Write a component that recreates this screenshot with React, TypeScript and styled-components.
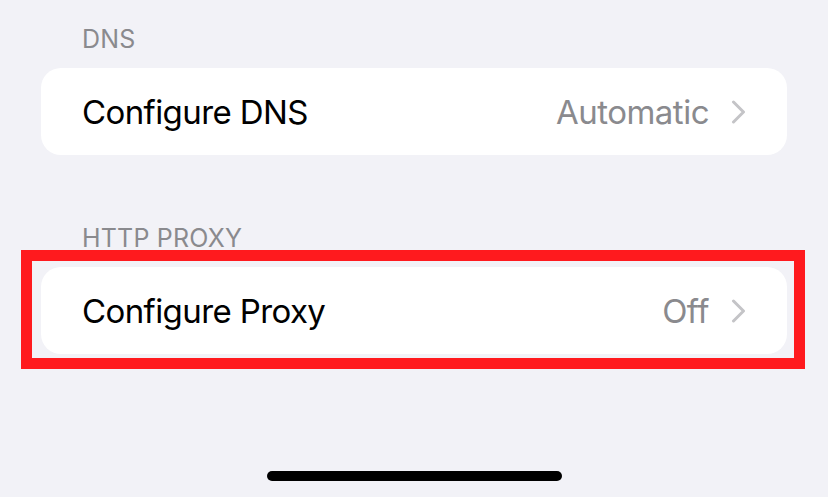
import React from "react";
import styled, { createGlobalStyle } from "styled-components";

const GlobalStyle = createGlobalStyle`
  html, body {
    margin: 0;
    padding: 0;
    background: #f2f2f7;
  }
  body {
    font-family: Inter, "Noto Sans", "Liberation Sans", sans-serif;
    -webkit-font-smoothing: antialiased;
  }
`;

interface RowProps {
  label: string;
  value: string;
  highlighted?: boolean;
}

const Chevron = () => (
  <svg width="15" height="24" viewBox="0 0 15 24" fill="none">
    <polyline
      points="2.5,2 12.5,12 2.5,22"
      stroke="#c4c4c7"
      strokeWidth="3"
      strokeLinecap="round"
      strokeLinejoin="round"
    />
  </svg>
);

const SettingsRow = ({ label, value, highlighted }: RowProps) => (
  <CardWrap>
    <Card>
      <Label>{label}</Label>
      <Value>{value}</Value>
      <Chevron />
    </Card>
    {highlighted && <Highlight />}
  </CardWrap>
);

const App = () => {
  return (
    <Page>
      <GlobalStyle />
      <Section>
        <SectionHeader>DNS</SectionHeader>
        <SettingsRow label="Configure DNS" value="Automatic" />
      </Section>
      <Section>
        <SectionHeader>HTTP PROXY</SectionHeader>
        <SettingsRow label="Configure Proxy" value="Off" highlighted />
      </Section>
      <HomeIndicator />
    </Page>
  );
};

export default App;

const Page = styled.div`
  height: 497px;
  box-sizing: border-box;
  padding: 24px 41px 0;
  display: flex;
  flex-direction: column;
  gap: 68px;
  overflow: hidden;
`;

const Section = styled.section`
  display: flex;
  flex-direction: column;
  gap: 14px;
`;

const SectionHeader = styled.div`
  padding-left: 41px;
  font-size: 25px;
  line-height: 30px;
  color: #8a8a8e;
  letter-spacing: 0.2px;
`;

const CardWrap = styled.div`
  position: relative;
`;

const Card = styled.div`
  height: 87px;
  background: #ffffff;
  border-radius: 20px;
  padding: 0 41px;
  display: flex;
  align-items: center;
`;

const Label = styled.span`
  flex: 1;
  font-size: 33px;
  line-height: 40px;
  color: #000;
  letter-spacing: -0.6px;
`;

const Value = styled.span`
  font-size: 33px;
  line-height: 40px;
  color: #8a8a8e;
  margin-right: 22px;
  letter-spacing: -0.5px;
`;

const Highlight = styled.div`
  position: absolute;
  left: -20px;
  right: -18px;
  top: -17px;
  bottom: -15px;
  border: 11px solid #ff1a1e;
  pointer-events: none;
`;

const HomeIndicator = styled.div`
  margin: auto auto 16px;
  width: 295px;
  height: 10px;
  border-radius: 5px;
  background: #000;
`;
